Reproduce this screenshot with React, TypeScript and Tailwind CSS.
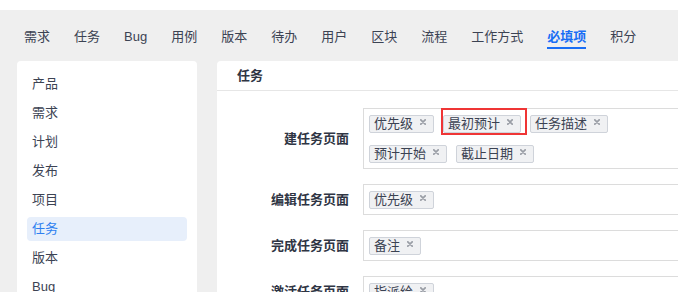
import React from "react";

const navItems = ["需求", "任务", "Bug", "用例", "版本", "待办", "用户", "区块", "流程", "工作方式", "必填项", "积分"];
const sideItems = ["产品", "需求", "计划", "发布", "项目", "任务", "版本", "Bug"];

function X() {
  return (
    <svg width="6" height="6" viewBox="0 0 6 6" className="mt-[3px] ml-[7px] shrink-0">
      <path d="M0.8 0.8L5.2 5.2M5.2 0.8L0.8 5.2" stroke="#9a9ea6" strokeWidth="1.7" strokeLinecap="round" />
    </svg>
  );
}

function Tag({ text, marked }: { text: string; marked?: boolean }) {
  return (
    <div className="relative flex items-start h-[18px] border border-[#cfd3da] bg-[#f0f1f3] rounded-[2px] pl-[4px] pr-[7px]">
      <span className="text-[13px] leading-[16px] text-[#3b4252]">{text}</span>
      <X />
      {marked && (
        <div className="absolute left-[-3px] right-[-7px] top-[-8px] bottom-[-3px] border-2 border-[#ef3535] pointer-events-none" />
      )}
    </div>
  );
}

function Row({ label, tags, markIdx }: { label: string; tags: string[]; markIdx?: number }) {
  return (
    <div className="flex items-center">
      <div className="w-[132px] shrink-0 text-right font-bold text-[13px] text-[#2f3544]">{label}</div>
      <div className="ml-[14px] w-[328px] shrink-0 border border-[#dcdcdc] pt-[6px] pb-[5px] px-[5px] flex flex-wrap gap-x-[9px] gap-y-[12px]">
        {tags.map((t, i) => (
          <Tag key={i} text={t} marked={i === markIdx} />
        ))}
      </div>
    </div>
  );
}

export default function App() {
  return (
    <div
      className="w-[678px] h-[292px] overflow-hidden bg-[#efefef]"
      style={{ fontFamily: '"Liberation Sans", "Noto Sans CJK SC", sans-serif' }}
    >
      <div className="h-[10px] bg-white" />
      <div className="h-[51px] flex items-start gap-[24px] pl-[24px] pt-[17px]">
        {navItems.map((n) => {
          const active = n === "必填项";
          return (
            <div
              key={n}
              className={
                "relative text-[13px] leading-[20px] whitespace-nowrap " +
                (active ? "font-bold text-[#1a6ef5]" : "text-[#3c4353]")
              }
            >
              {n}
              {active && <div className="absolute left-0 right-0 top-[20px] h-[2px] bg-[#1a6ef5]" />}
            </div>
          );
        })}
      </div>
      <div className="flex gap-[20px] pl-[17px]">
        <div className="w-[180px] shrink-0 bg-white rounded-[4px] h-[300px] pt-[11px] px-[10px] flex flex-col gap-[5px]">
          {sideItems.map((s) => {
            const active = s === "任务";
            return (
              <div
                key={s}
                className={
                  "h-[24px] flex items-center pl-[5px] rounded-[4px] text-[13px] " +
                  (active ? "bg-[#e7effb] text-[#2e7ff0]" : "text-[#3c4353]")
                }
              >
                {s}
              </div>
            );
          })}
        </div>
        <div className="w-[560px] shrink-0 bg-white rounded-[4px] h-[300px]">
          <div className="h-[30px] border-b border-[#e6e6e6] flex items-center px-[20px]">
            <span className="font-bold text-[13px] text-[#2f3544]">任务</span>
          </div>
          <div className="pt-[17px] flex flex-col gap-[15px]">
            <Row label="建任务页面" tags={["优先级", "最初预计", "任务描述", "预计开始", "截止日期"]} markIdx={1} />
            <Row label="编辑任务页面" tags={["优先级"]} />
            <Row label="完成任务页面" tags={["备注"]} />
            <Row label="激活任务页面" tags={["指派给"]} />
          </div>
        </div>
      </div>
    </div>
  );
}
